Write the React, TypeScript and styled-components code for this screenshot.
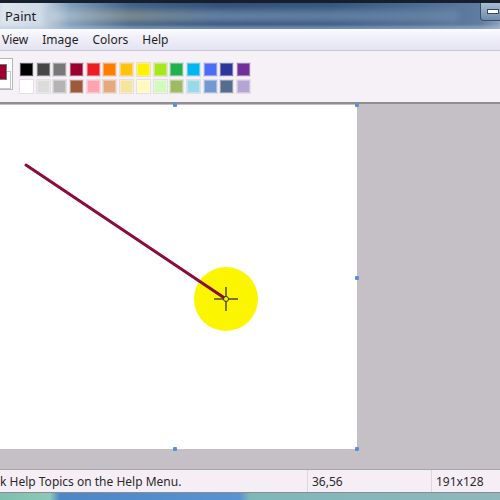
import styled, { createGlobalStyle } from 'styled-components';

const GlobalStyle = createGlobalStyle`
  html, body {
    margin: 0;
    padding: 0;
    background: #c5c0c6;
  }
  body {
    font-family: 'Noto Sans', 'Open Sans', sans-serif;
  }
`;

const topRow = [
  '#000000', '#464646', '#787878', '#990030', '#ed1c24', '#ff7e00', '#ffc20e',
  '#fff200', '#a8e61d', '#22b14c', '#00b7ef', '#4d6df3', '#2f3699', '#6f3198',
];

const bottomRow = [
  '#ffffff', '#dcdcdc', '#b4b4b4', '#9c5a3c', '#ffa3b1', '#e5aa7a', '#f5e49c',
  '#fff9bd', '#d3f9bc', '#9dbb61', '#99d9ea', '#709ad1', '#546d8e', '#b5a5d5',
];

const menuItems = ['View', 'Image', 'Colors', 'Help'];

// resize handles around the canvas
const handles = [
  { x: 173, y: -2 },
  { x: 355, y: -2 },
  { x: 355, y: 171 },
  { x: 173, y: 342 },
  { x: 355, y: 342 },
];

export default function App() {
  return (
    <>
      <GlobalStyle />
      <Window>
        <TitleBar>
          <TitleText>Paint</TitleText>
          <TitleBlur />
          <MinimizeButton>
            <MinimizeGlyph />
          </MinimizeButton>
        </TitleBar>
        <MenuBar>
          {menuItems.map((item) => (
            <MenuItem key={item}>{item}</MenuItem>
          ))}
        </MenuBar>
        <PaletteBar>
          <CurrentColors>
            <Secondary />
            <Primary />
          </CurrentColors>
          <PaletteGrid>
            {topRow.map((color, index) => (
              <Swatch key={`t${index}`} color={color} />
            ))}
            {bottomRow.map((color, index) => (
              <Swatch key={`b${index}`} color={color} />
            ))}
          </PaletteGrid>
        </PaletteBar>
        <Workspace>
          <Canvas>
            <svg width="357" height="344" viewBox="0 0 357 344">
              <circle cx="226" cy="194" r="32" fill="#fbf500" />
              <line x1="26" y1="60" x2="226" y2="194" stroke="#8a0b3c" strokeWidth="3" strokeLinecap="round" />
              <line x1="226" y1="182" x2="226" y2="206" stroke="#333" strokeWidth="1.3" />
              <line x1="214" y1="194" x2="238" y2="194" stroke="#333" strokeWidth="1.3" />
              <circle cx="226" cy="194" r="2.5" fill="#fbf500" stroke="#333" strokeWidth="1" />
            </svg>
            {handles.map((h, index) => (
              <Handle key={index} style={{ left: h.x, top: h.y }} />
            ))}
          </Canvas>
        </Workspace>
        <StatusBar>
          <StatusCell width="307px">k Help Topics on the Help Menu.</StatusCell>
          <StatusCell width="124px" divided>36,56</StatusCell>
          <StatusCell width="69px" divided>191x128</StatusCell>
        </StatusBar>
        <Taskbar />
      </Window>
    </>
  );
}

const Window = styled.div`
  width: 500px;
  height: 500px;
  display: flex;
  flex-direction: column;
  overflow: hidden;
`;

const TitleBar = styled.div`
  height: 29px;
  flex-shrink: 0;
  position: relative;
  display: flex;
  align-items: center;
  box-sizing: border-box;
  border-top: 3px solid #15202c;
  background: linear-gradient(
    90deg,
    #dfe6ee 0px,
    #cfdbe7 40px,
    #7f9dbb 70px,
    #3f6289 130px,
    #2f5079 220px,
    #34567e 330px,
    #4b6c92 420px,
    #5f7d9f 480px,
    #8aa1bb 500px
  );
  box-shadow: inset 0 -3px 3px rgba(180, 200, 225, 0.5);
`;

const TitleText = styled.span`
  margin-left: 5px;
  font-size: 13px;
  color: #1b1b1b;
  position: relative;
  z-index: 1;
`;

const TitleBlur = styled.div`
  position: absolute;
  left: 50px;
  right: 40px;
  top: 7px;
  height: 12px;
  border-radius: 6px;
  background: linear-gradient(
    90deg,
    rgba(255, 255, 255, 0.25),
    rgba(230, 210, 150, 0.35) 20%,
    rgba(200, 215, 235, 0.35) 40%,
    rgba(200, 215, 235, 0.3) 70%,
    rgba(200, 215, 235, 0.15)
  );
  filter: blur(3px);
`;

const MinimizeButton = styled.div`
  position: absolute;
  right: -6px;
  top: 0;
  width: 26px;
  height: 18px;
  box-sizing: border-box;
  border: 1px solid #3c4f66;
  border-top: none;
  border-radius: 0 0 0 4px;
  background: linear-gradient(#a9bdd3, #6e8bab);
  display: flex;
  align-items: center;
  padding-left: 6px;
`;

const MinimizeGlyph = styled.div`
  width: 10px;
  height: 3px;
  background: #ffffff;
  border: 1px solid #3b4a5c;
`;

const MenuBar = styled.div`
  height: 21px;
  flex-shrink: 0;
  display: flex;
  align-items: center;
  gap: 14px;
  padding-left: 2px;
  background: linear-gradient(#fbfbfe, #f0eff9 40%, #e4e3f3);
`;

const MenuItem = styled.span`
  font-size: 12px;
  color: #1e1e1e;
`;

const PaletteBar = styled.div`
  height: 54px;
  flex-shrink: 0;
  display: flex;
  align-items: flex-start;
  gap: 6px;
  box-sizing: border-box;
  padding-top: 11px;
  background: #f6f1f6;
  border-top: 1px solid #c9c6d4;
  border-bottom: 2px solid #8f8d92;
`;

const CurrentColors = styled.div`
  position: relative;
  width: 12px;
  height: 30px;
  margin-top: -4px;
  border: 1px solid #b8b4bc;
  border-left: none;
  background: #ffffff;
`;

const Primary = styled.div`
  position: absolute;
  left: 0;
  top: 5px;
  width: 6px;
  height: 14px;
  background: #990030;
  border: 1px solid #777;
  border-left: none;
`;

const Secondary = styled.div`
  position: absolute;
  left: 0;
  top: 12px;
  width: 10px;
  height: 16px;
  background: #ffffff;
  border: 1px solid #c8c4cc;
  border-left: none;
`;

const PaletteGrid = styled.div`
  display: grid;
  grid-template-columns: repeat(14, 15px);
  grid-auto-rows: 15px;
  column-gap: 1.7px;
  row-gap: 2px;
`;

const Swatch = styled.div<{ color: string }>`
  box-sizing: border-box;
  background: ${(props) => props.color};
  border: 1px solid #e4dfe6;
  box-shadow: inset 0 0 0 1px rgba(255, 255, 255, 0.35);
`;

const Workspace = styled.div`
  flex: 1;
  background: #c5c0c6;
  padding-top: 1px;
`;

const Canvas = styled.div`
  position: relative;
  width: 357px;
  height: 344px;
  background: #ffffff;

  svg {
    display: block;
  }
`;

const Handle = styled.div`
  position: absolute;
  width: 4px;
  height: 4px;
  background: #5b8fd6;
  border-radius: 1px;
`;

const StatusBar = styled.div`
  height: 24px;
  flex-shrink: 0;
  display: flex;
  align-items: center;
  box-sizing: border-box;
  background: #f6eef5;
  border-top: 1px solid #a9a6ab;
  border-bottom: 1px solid #8b8b93;
`;

const StatusCell = styled.div<{ width: string; divided?: boolean }>`
  width: ${(props) => props.width};
  height: 100%;
  display: flex;
  align-items: center;
  box-sizing: border-box;
  padding-left: ${(props) => (props.divided ? '4px' : '0')};
  border-left: ${(props) => (props.divided ? '1px solid #ddd6dc' : 'none')};
  font-size: 12px;
  color: #2a2a2a;
  white-space: nowrap;
`;

const Taskbar = styled.div`
  height: 7px;
  flex-shrink: 0;
  background: linear-gradient(
    90deg,
    #7fbfae 0px,
    #8cc8b7 50px,
    #4d86c6 60px,
    #5a93d2 240px,
    #7fb7b8 250px,
    #8fb7bc 500px
  );
`;
